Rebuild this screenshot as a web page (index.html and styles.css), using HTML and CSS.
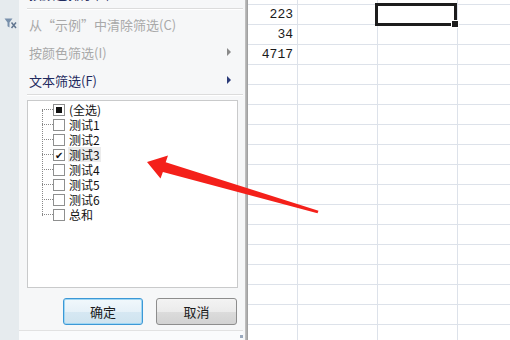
FILE: index.html
```html
<!DOCTYPE html>
<html lang="zh-CN">
<head>
    <meta charset="UTF-8">
    <title>筛选</title>
<link rel="stylesheet" href="styles.css">
</head>
<body>
    <div class="screen">
        <!-- barra lateral con icono de filtro -->
        <div class="rail">
            <svg width="13" height="11" viewBox="0 0 13 11">
                <path d="M0.5 0.5 H8.5 L5.5 4.5 V9.5 L3.5 8.3 V4.5 Z" fill="#7890ab"/>
                <path d="M7.5 4.5 L12 10 M12 4.5 L7.5 10" stroke="#61758f" stroke-width="1.5"/>
            </svg>
        </div>

        <!-- menú de filtro -->
        <div class="menu">
            <div class="item cut">按颜色排序(<u>T</u>)</div>
            <div class="sep"></div>
            <div class="item off">从“示例”中清除筛选(<u>C</u>)</div>
            <div class="item off sub">按颜色筛选(<u>I</u>)</div>
            <div class="item sub">文本筛选(<u>F</u>)</div>
            <div class="sep"></div>

            <div class="list">
                <div class="tree">
                    <div class="row"><span class="check part"></span><span class="label">(全选)</span></div>
                    <div class="row"><span class="check"></span><span class="label">测试1</span></div>
                    <div class="row"><span class="check"></span><span class="label">测试2</span></div>
                    <div class="row"><span class="check on">✔</span><span class="label hot">测试3</span></div>
                    <div class="row"><span class="check"></span><span class="label">测试4</span></div>
                    <div class="row"><span class="check"></span><span class="label">测试5</span></div>
                    <div class="row"><span class="check"></span><span class="label">测试6</span></div>
                    <div class="row"><span class="check"></span><span class="label">总和</span></div>
                </div>
            </div>

            <div class="btns">
                <button class="btn focus">确定</button>
                <button class="btn">取消</button>
            </div>
            <div class="foot"><span class="grip"></span></div>
        </div>

        <div class="shade"></div>

        <!-- hoja de cálculo -->
        <div class="sheet">
            <div class="num">2</div><div></div><div></div><div></div>
            <div class="num">223</div><div></div><div class="sel"></div><div></div>
            <div class="num">34</div><div></div><div></div><div></div>
            <div class="num">4717</div><div></div><div></div><div></div>
        </div>

        <!-- flecha roja -->
        <svg class="arrow" width="510" height="340" viewBox="0 0 510 340">
            <polygon points="147,162 168,155.5 165.7,162.3 318.5,210.8 317.5,213.2 162.9,172 160.5,178.5" fill="#f4201a"/>
        </svg>
    </div>
</body>
</html>
```
FILE: styles.css
```css
/* Estilo general */
* {
    box-sizing: border-box;
}

body {
    margin: 0;
    overflow: hidden;
    font-family: "Noto Sans CJK SC", sans-serif;
}

.screen {
    position: relative;
    display: flex;
    width: 510px;
    height: 340px;
    overflow: hidden;
    background: #fff;
}

/* Barra lateral */
.rail {
    width: 19px;
    flex: none;
    background: #e6ebee;
    display: flex;
    justify-content: center;
    padding-top: 18px;
}

.rail svg {
    margin-left: 1px;
}

/* Menú */
.menu {
    width: 226px;
    flex: none;
    background: #f6f7f8;
    padding-right: 2px;
}

.item {
    height: 28px;
    display: flex;
    align-items: center;
    padding-left: 10px;
    padding-right: 12px;
    font-size: 13px;
    color: #1f2a5e;
    position: relative;
}

.item u {
    text-decoration: none;
}

.item.cut {
    margin-top: -21px;
    height: 29px;
}

.item.off {
    color: #a9a9a9;
}

.item.sub::after {
    content: "";
    position: absolute;
    right: 12px;
    top: 10px;
    border-left: 4px solid #2b3b78;
    border-top: 4px solid transparent;
    border-bottom: 4px solid transparent;
}

.item.off.sub::after {
    border-left-color: #8a8a8a;
}

.sep {
    margin-left: 8px;
    height: 2px;
    border-top: 1px solid #dcdcdc;
    border-bottom: 1px solid #fff;
}

/* Lista de valores */
.list {
    margin: 4px 5px 0 8px;
    height: 188px;
    background: #fff;
    border: 1px solid #c9cacb;
    padding: 1px 0 0 14px;
}

.tree {
    position: relative;
    font-size: 12px;
    line-height: 15px;
    color: #111;
}

.tree::before {
    content: "";
    position: absolute;
    left: 0;
    top: 8px;
    height: 106px;
    border-left: 1px dotted #888;
}

.row {
    display: flex;
    align-items: center;
    height: 15px;
    padding-left: 11px;
    position: relative;
}

.row::before {
    content: "";
    position: absolute;
    left: 0;
    top: 7px;
    width: 11px;
    border-top: 1px dotted #888;
}

.check {
    width: 12px;
    height: 12px;
    border: 1px solid #8e8f8f;
    background: #fff;
    display: flex;
    align-items: center;
    justify-content: center;
    font-size: 10px;
    line-height: 1;
    flex: none;
}

.check.part::after {
    content: "";
    width: 6px;
    height: 6px;
    background: #111;
}

.check.on {
    color: #111;
}

.label {
    margin-left: 3px;
    padding: 0 1px;
    height: 15px;
    line-height: 15px;
}

.label.hot {
    background: #ececec;
}

/* Botones */
.btns {
    display: flex;
    gap: 13px;
    margin-top: 10px;
    padding-left: 44px;
}

.btn {
    height: 27px;
    width: 80px;
    border: 1px solid #8d8d8d;
    border-radius: 3px;
    background: linear-gradient(#f3f3f3, #ebebeb 50%, #dcdcdc 51%, #d2d2d2);
    font-family: "Noto Sans CJK SC", sans-serif;
    font-size: 13px;
    color: #1a1a1a;
    padding: 0;
}

.btn + .btn {
    width: 81px;
}

.btn.focus {
    border-color: #3c98d6;
    box-shadow: inset 0 0 0 1px #9fd6f3;
    background: linear-gradient(#f1f8fc, #e6f1f8 50%, #d6e8f3 51%, #cfe3ef);
}

.foot {
    margin-top: 5px;
    height: 10px;
    border-top: 1px solid #e2e2e2;
    background: #fafbfc;
    position: relative;
}

.grip {
    position: absolute;
    right: 0;
    bottom: 2px;
    width: 3px;
    height: 3px;
    background: #9aa9bd;
}

.shade {
    width: 3px;
    flex: none;
    background: linear-gradient(to right, #c4c4c4, #9a9a9a);
}

/* Hoja de cálculo */
.sheet {
    flex: 1;
    display: grid;
    grid-template-columns: 49px 80px 80px 1fr;
    grid-template-rows: 4px;
    grid-auto-rows: 20px;
    align-content: start;
    background-color: #fff;
    background-image:
        linear-gradient(to bottom, #dde2ea 1px, transparent 1px),
        linear-gradient(to right, #dde2ea 1px, transparent 1px);
    background-size: 100% 20px, 80px 100%;
    background-position: 0 4px, 49px 0;
    font-family: "Liberation Mono", monospace;
    font-size: 13px;
    color: #1a1a1a;
}

.sheet > div:first-child {
    margin-top: -16px;
    line-height: 16px;
}

.num {
    text-align: right;
    padding-right: 4px;
    line-height: 22px;
}

.sel {
    position: relative;
    border: 3px solid #1c1c1c;
    margin: -1px 0 -2px -2px;
}

.sel::after {
    content: "";
    position: absolute;
    right: -5px;
    bottom: -5px;
    width: 6px;
    height: 6px;
    background: #1c1c1c;
    border: 1px solid #fff;
}

.arrow {
    position: absolute;
    left: 0;
    top: 0;
    pointer-events: none;
}
```
